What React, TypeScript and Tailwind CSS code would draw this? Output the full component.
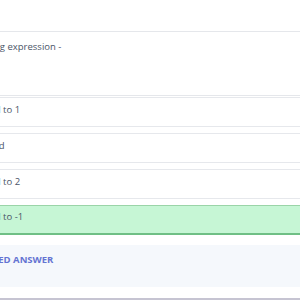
import React from 'react';

const options = [
  { id: 'a', label: 'Equal to 1', shift: '-ml-[24px]', correct: false },
  { id: 'b', label: 'Undefined', shift: '-ml-[42px]', correct: false },
  { id: 'c', label: 'Equal to 2', shift: '-ml-[24px]', correct: false },
  { id: 'd', label: 'Equal to -1', shift: '-ml-[24px]', correct: true },
];

const App: React.FC = () => {
  return (
    <div className="w-[300px] h-[300px] overflow-hidden bg-white font-['Open_Sans',sans-serif] text-[#4a5568]">
      <div className="h-[31px]" />

      {/* Question */}
      <div className="h-[65px] border-y border-[#e5e7eb] pt-[8px]">
        <p className="-ml-[128px] whitespace-nowrap text-[9.5px]">Find the value of the following expression -</p>
      </div>

      {/* Options */}
      <div className="flex flex-col gap-[6px] pt-[1px]">
        {options.map(o => (
          <div
            key={o.id}
            className={`h-[30px] flex items-center pb-[4px] border-y ${o.correct ? 'bg-[#c6f6d5] border-t-[#9ad4a8] border-b-[#6fbf85] border-b-2' : 'bg-white border-[#e6e8ec]'}`}
          >
            <span className={`${o.shift} whitespace-nowrap text-[9.5px]`}>{o.label}</span>
          </div>
        ))}
      </div>

      {/* Verified answer */}
      <div className="mt-[10px] h-[42px] bg-[#f5f8fc] pt-[8px]">
        <p className="-ml-[31px] whitespace-nowrap text-[9.5px] font-bold text-[#6474d2]">VERIFIED ANSWER</p>
      </div>
      <div className="h-[11px]" />
      <div className="h-[2px] bg-[#c6c4d2]" />
    </div>
  );
};

export default App;
